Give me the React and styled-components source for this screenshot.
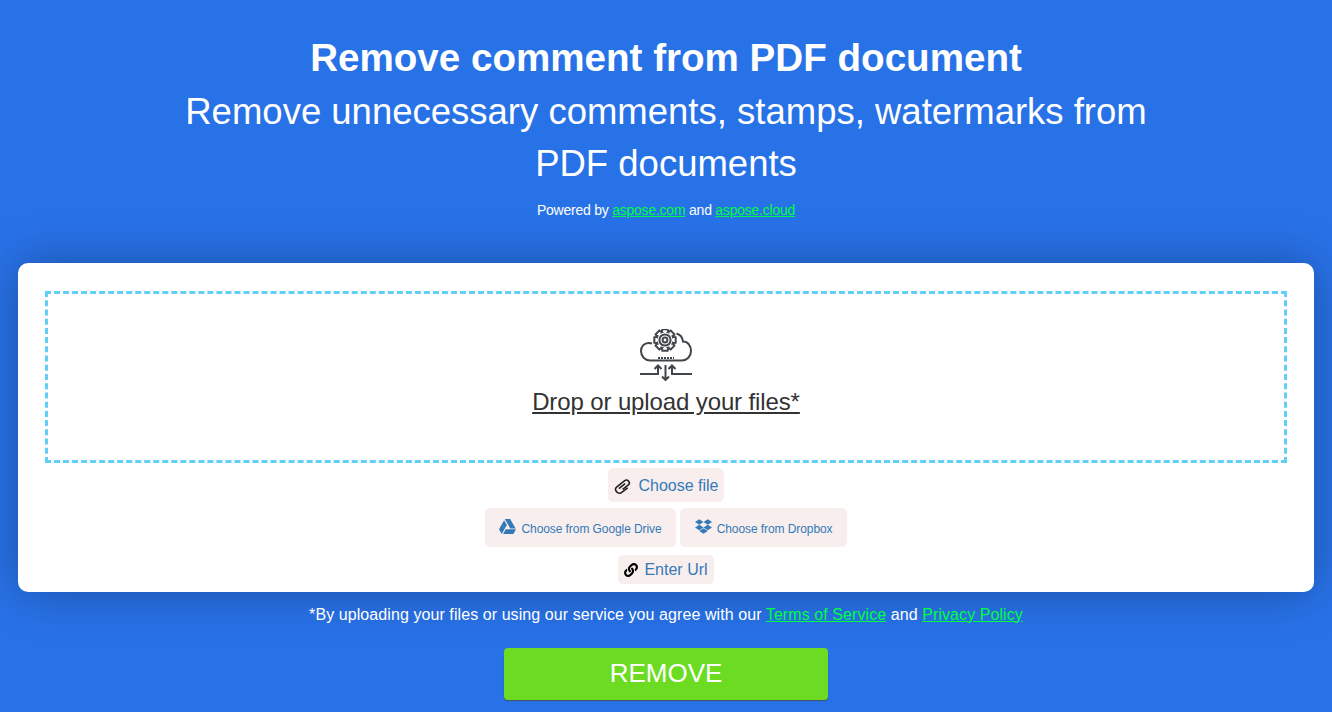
import React from 'react'
import styled, { createGlobalStyle } from 'styled-components'
import { FaGoogleDrive, FaDropbox, FaLink } from 'react-icons/fa'

const GlobalStyle = createGlobalStyle`
  html, body {
    margin: 0;
    padding: 0;
    background: #2872e8;
    font-family: "Liberation Sans", Arial, sans-serif;
    overflow: hidden;
  }
`

const Page = styled.div`
  width: 1332px;
  height: 712px;
  background: #2872e8;
  color: #fff;
  display: flex;
  flex-direction: column;
  align-items: center;
  overflow: hidden;
`

const Header = styled.header`
  width: 1000px;
  padding-top: 32px;
  text-align: center;
`

const Title = styled.h1`
  margin: 0;
  font-size: 38.6px;
  line-height: 52.5px;
  font-weight: 700;
`

const Subtitle = styled.h2`
  margin: 1px 0 0;
  font-size: 36.5px;
  line-height: 52px;
  font-weight: 400;
`

const Powered = styled.p`
  margin: 10px 0 0;
  font-size: 14px;
  line-height: 20px;
  letter-spacing: -0.23px;
`

const GreenLink = styled.a`
  color: #00ff40;
  text-decoration: underline;
`

const Card = styled.section`
  width: 1296px;
  height: 329px;
  margin-top: 43px;
  box-sizing: border-box;
  padding: 28px 27px 0;
  background: #fff;
  border-radius: 10px;
  box-shadow: 0 0 50px rgba(0, 0, 0, 0.3);
  display: flex;
  flex-direction: column;
  align-items: center;
`

const DropZone = styled.div`
  width: 100%;
  height: 172px;
  box-sizing: border-box;
  border: 3px dashed #62cff7;
  display: flex;
  flex-direction: column;
  align-items: center;
  padding-top: 35px;
  color: #333;
`

const DropText = styled.span`
  margin-top: 4px;
  font-size: 24px;
  line-height: 34px;
  letter-spacing: -0.12px;
  text-decoration: underline;
`

const Pill = styled.a`
  display: inline-flex;
  align-items: center;
  box-sizing: border-box;
  height: ${p => p.$h}px;
  padding: ${p => p.$pad};
  background: #f9eeee;
  border-radius: 5px;
  color: #337ab7;
  font-size: ${p => p.$size}px;
  gap: ${p => p.$gap}px;
`

const SmallPill = styled(Pill)`
  letter-spacing: -0.08px;
`

const ChooseRow = styled.div`
  margin-top: ${p => p.$top}px;
  display: flex;
  justify-content: center;
  gap: 4px;
`

const RaisedDrive = styled(FaGoogleDrive)`
  margin-top: -5px;
`

const RaisedDropbox = styled(FaDropbox)`
  margin-top: -5px;
`

const Terms = styled.p`
  margin: 13px 0 0;
  font-size: 16px;
  line-height: 20px;
  letter-spacing: 0.08px;
`

const RemoveButton = styled.button`
  margin-top: 23px;
  width: 324px;
  height: 52px;
  border: 0;
  border-radius: 4px;
  background: #6bdc22;
  box-shadow: 0 1px 1px rgba(90, 60, 40, 0.7);
  color: #fff;
  font-family: inherit;
  font-size: 26px;
`

// 8 tooth gear outline round (cx, cy)
const gearPath = (cx, cy, outer, inner) => {
  const pts = []
  for (let i = 0; i < 8; i++) {
    const a = (i * Math.PI) / 4
    const spots = [[-0.4, inner], [-0.24, outer], [0.24, outer], [0.4, inner]]
    spots.forEach(([d, r]) => {
      pts.push(`${(cx + r * Math.sin(a + d)).toFixed(2)} ${(cy - r * Math.cos(a + d)).toFixed(2)}`)
    })
  }
  return `M${pts.join('L')}Z`
}

const CloudIcon = () => (
  <svg width="52" height="52" viewBox="0 0 52 52" fill="none" stroke="#41464b" strokeWidth="2">
    <path d="M36.5 4.5C40 5.5 42.5 8.5 43 12.5C48 12.5 51 17 51 22C51 27.5 47 31.5 42 31.5H10C5 31.5 1 27.5 1 22C1 17.5 4 14 8.5 14C9.5 14 11 14 12 14.5" />
    <path d={gearPath(25, 11, 11, 8.4)} />
    <circle cx="25" cy="11" r="5.6" />
    <circle cx="25" cy="11" r="2.4" />
    <path d="M18 29H34" strokeDasharray="2 1" />
    <path d="M0 45H18V37M14.5 40l3.5-3.5 3.5 3.5" />
    <path d="M52 45H32V37M28.5 40l3.5-3.5 3.5 3.5" />
    <path d="M25.5 36V51M22 47.5l3.5 3.5 3.5-3.5" />
  </svg>
)

const ClipIcon = () => (
  <svg width="17" height="16" viewBox="-8.5 -8 17 16" fill="none" stroke="#222" strokeWidth="1.6">
    <g transform="rotate(-38)">
      <path d="M-2 2.8H5C6.6 2.8 7.8 1.6 7.8 0S6.6-2.8 5-2.8H-5C-6.8-2.8-8.2-1.3-8.2.6S-6.8 4.6-5 4.6H3" />
      <path d="M-4.5 -.2H3.5" />
    </g>
  </svg>
)

export default function App() {
  return (
    <>
      <GlobalStyle />
      <Page>
        <Header>
          <Title>Remove comment from PDF document</Title>
          <Subtitle>Remove unnecessary comments, stamps, watermarks from PDF documents</Subtitle>
          <Powered>
            Powered by <GreenLink>aspose.com</GreenLink> and <GreenLink>aspose.cloud</GreenLink>
          </Powered>
        </Header>
        <Card>
          <DropZone>
            <CloudIcon />
            <DropText>Drop or upload your files*</DropText>
          </DropZone>
          <ChooseRow $top={5}>
            <Pill $h={34} $pad="2px 5px 0 6px" $size={16} $gap={7}>
              <ClipIcon />
              Choose file
            </Pill>
          </ChooseRow>
          <ChooseRow $top={6}>
            <SmallPill $h={39} $pad="3px 14.5px 0" $size={12} $gap={5}>
              <RaisedDrive size={17} />
              Choose from Google Drive
            </SmallPill>
            <SmallPill $h={39} $pad="3px 14.5px 0" $size={12} $gap={5}>
              <RaisedDropbox size={17} />
              Choose from Dropbox
            </SmallPill>
          </ChooseRow>
          <ChooseRow $top={8}>
            <Pill $h={29} $pad="1px 6px 0 6px" $size={16} $gap={6}>
              <FaLink size={14} color="#000" />
              Enter Url
            </Pill>
          </ChooseRow>
        </Card>
        <Terms>
          *By uploading your files or using our service you agree with our <GreenLink>Terms of Service</GreenLink> and <GreenLink>Privacy Policy</GreenLink>
        </Terms>
        <RemoveButton>REMOVE</RemoveButton>
      </Page>
    </>
  )
}
